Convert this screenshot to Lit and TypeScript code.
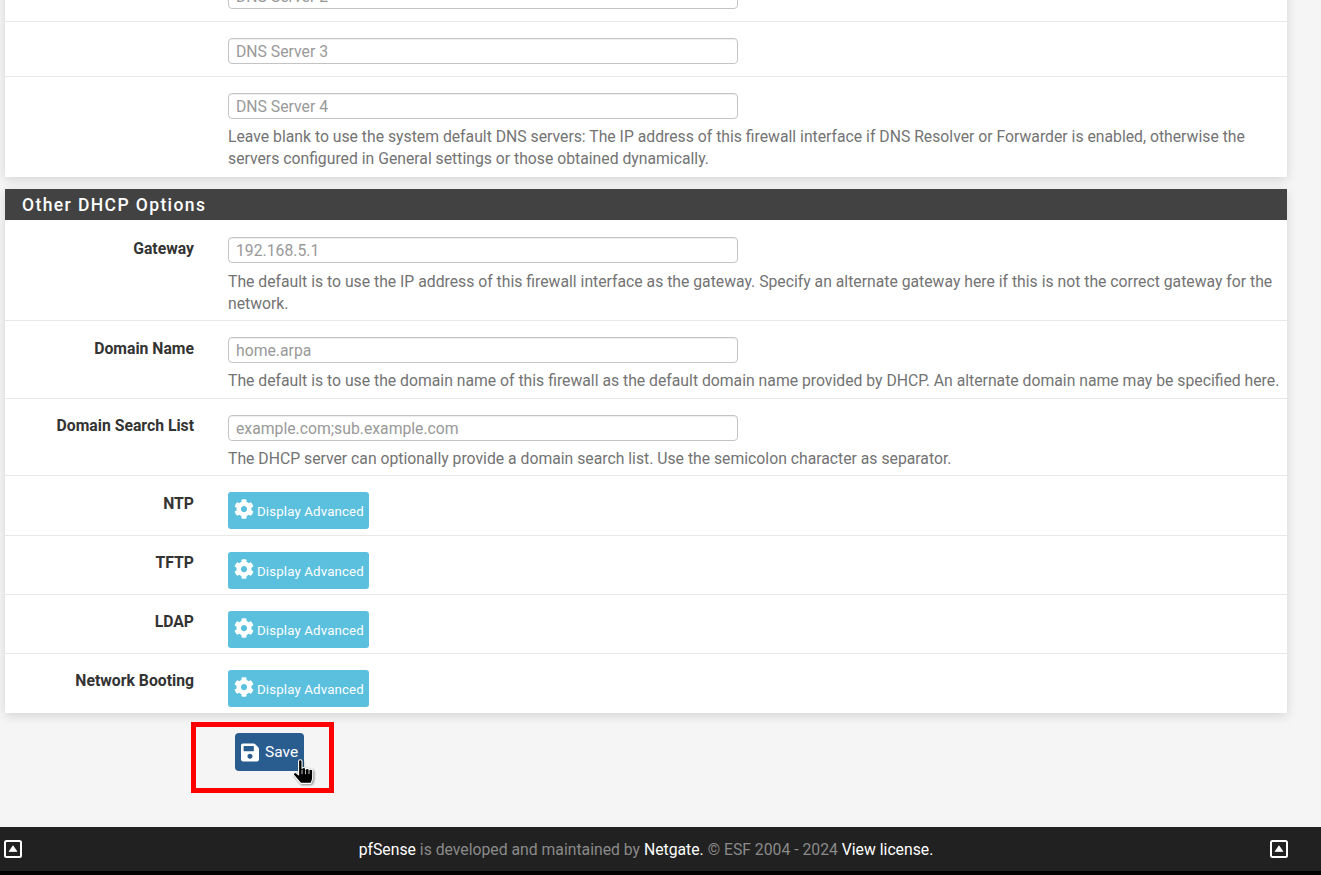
import { LitElement, html, css } from "lit";
import { customElement } from "lit/decorators.js";

const gear = html`<svg class="gear" viewBox="0 0 512 512" aria-hidden="true"><path fill="currentColor" d="M487.4 315.7l-42.6-24.6c4.3-23.2 4.3-47 0-70.2l42.6-24.6c4.9-2.8 7.1-8.6 5.5-14-11.1-35.6-30-67.8-54.7-94.6-3.8-4.1-10-5.1-14.8-2.3L380.8 110c-17.9-15.4-38.5-27.3-60.8-35.1V25.8c0-5.6-3.9-10.5-9.4-11.7-36.7-8.2-74.3-7.8-109.2 0-5.5 1.2-9.4 6.1-9.4 11.7V75c-22.2 7.9-42.8 19.8-60.8 35.1L88.7 85.5c-4.9-2.8-11-1.9-14.8 2.3-24.7 26.7-43.6 58.9-54.7 94.6-1.7 5.4.6 11.2 5.5 14L67.3 221c-4.3 23.2-4.3 47 0 70.2l-42.6 24.6c-4.9 2.8-7.1 8.6-5.5 14 11.1 35.6 30 67.8 54.7 94.6 3.8 4.1 10 5.1 14.8 2.3l42.6-24.6c17.9 15.4 38.5 27.3 60.8 35.1v49.2c0 5.6 3.9 10.5 9.4 11.7 36.7 8.2 74.3 7.8 109.2 0 5.5-1.2 9.4-6.1 9.4-11.7v-49.2c22.2-7.9 42.8-19.8 60.8-35.1l42.6 24.6c4.9 2.8 11 1.9 14.8-2.3 24.7-26.7 43.6-58.9 54.7-94.6 1.5-5.5-.7-11.3-5.6-14.1zM256 336c-44.1 0-80-35.9-80-80s35.9-80 80-80 80 35.9 80 80-35.9 80-80 80z"/></svg>`;

const floppy = html`<svg class="floppy" viewBox="0 0 448 512" aria-hidden="true"><path fill="currentColor" d="M433.9 129.9l-83.9-83.9A48 48 0 0 0 316.1 32H48C21.5 32 0 53.5 0 80v352c0 26.5 21.5 48 48 48h352c26.5 0 48-21.5 48-48V163.9a48 48 0 0 0-14.1-34zM224 416c-35.3 0-64-28.7-64-64 0-35.3 28.7-64 64-64s64 28.7 64 64c0 35.300-28.7 64-64 64zm96-304.5V212c0 6.6-5.4 12-12 12H76c-6.6 0-12-5.4-12-12V108c0-6.6 5.4-12 12-12h228.5c3.2 0 6.2 1.3 8.5 3.5l3.5 3.5c2.2 2.2 3.500 5.3 3.500 8.5z"/></svg>`;

const upIcon = html`<svg class="up" viewBox="0 0 18 18" aria-hidden="true"><rect x="1" y="1" width="16" height="16" rx="1.5" fill="none" stroke="#fff" stroke-width="2"/><path fill="#fff" stroke="#fff" stroke-width=".8" stroke-linejoin="round" d="M9 5.800 12.900 11.400H5.100z"/></svg>`;

const cursor = html`<svg class="cursor" viewBox="0 0 22 24" aria-hidden="true"><path fill="#000" stroke="#fff" stroke-width="1" stroke-linejoin="round" d="M6 2c0-1.800 3.200-1.800 3.200 0v6.800c0-1.300 3.200-1.300 3.200 0v.8c0-1.300 3.200-1.300 3.200 0v.8c0-1.300 3.400-1.300 3.400 0V17c0 2-.6 3.500-1.500 5.500H8L1.500 14.800c-1-1.500 1-3 2.500-1.800L6 14.600z"/><path stroke="#fff" stroke-width=".7" d="M9.200 10v4M12.400 10.500v3.500M15.600 11v3"/></svg>`;

@customElement("app-root")
export class AppRoot extends LitElement {
  static styles = css`
    :host {
      display: block;
      height: 875px;
      overflow: hidden;
      background: #f5f5f5;
      font-family: Roboto, "Liberation Sans", sans-serif;
      font-size: 15.75px;
      color: #333;
    }
    .page {
      height: 875px;
      display: flex;
      flex-direction: column;
      overflow: hidden;
    }
    .panels {
      width: 1282px;
      margin: -33px 0 0 5px;
    }
    .panel {
      background: #fff;
      box-shadow: 0 3px 10px rgba(0, 0, 0, 0.13);
    }
    .panel + .panel {
      margin-top: 12px;
    }
    .heading {
      height: 31px;
      background: #424242;
      color: #fff;
      font-size: 17.5px;
      font-weight: 500;
      letter-spacing: 1.4px;
      line-height: 33px;
      padding-left: 17px;
    }
    .row {
      display: grid;
      grid-template-columns: 189px 1fr;
      column-gap: 34px;
      padding: 16px 0 6px;
      border-bottom: 1px solid #e8e8e8;
    }
    .row:last-child {
      border-bottom-color: transparent;
    }
    .heading + .row {
      padding: 17px 0 5px;
    }
    .heading + .row .help {
      margin-top: 8px;
    }
    .label {
      text-align: right;
      font-weight: 700;
      font-size: 15.75px;
      line-height: 23px;
      color: #333;
    }
    .tight .label,
    .tight + .adv ~ .adv .label {
      line-height: 22px;
    }
    .input {
      box-sizing: border-box;
      width: 510px;
      height: 26px;
      border: 1px solid #c4c4c4;
      border-radius: 4px;
      background: #fff;
      color: #999;
      font-size: 15.75px;
      line-height: 25px;
      padding-left: 7px;
      box-shadow: inset 0 1px 1px rgba(0, 0, 0, 0.07);
    }
    .help {
      margin-top: 7px;
      font-size: 15.75px;
      line-height: 22px;
      color: #737373;
      white-space: nowrap;
    }
    .single {
      height: 55px;
      box-sizing: border-box;
    }
    .tight {
      padding-bottom: 5px;
    }
    .adv {
      height: 59px;
      box-sizing: border-box;
      padding-top: 16px;
    }
    .tight + .adv {
      height: 60px;
    }
    .btn-info {
      box-sizing: border-box;
      display: inline-flex;
      align-items: flex-start;
      width: 141px;
      height: 37px;
      background: #5bc0de;
      color: #fff;
      border-radius: 3px;
      padding: 7px 0 0 6px;
      font-size: 13.25px;
      line-height: 25px;
      white-space: nowrap;
      letter-spacing: 0.15px;
    }
    .gear {
      width: 20px;
      height: 20px;
      margin-right: 3px;
      flex: none;
    }
    .save-box {
      box-sizing: border-box;
      width: 143px;
      height: 72px;
      margin: 9px 0 0 190.5px;
      border: 5px solid #ff0000;
      padding: 6px 0 0 39.5px;
    }
    .save {
      position: relative;
      box-sizing: border-box;
      width: 69px;
      height: 38px;
      background: #2a5d8f;
      color: #fff;
      border-radius: 4px;
      display: flex;
      align-items: center;
      padding-left: 6px;
      font-size: 15.5px;
    }
    .floppy {
      width: 18px;
      height: 21px;
      margin-right: 6px;
    }
    .cursor {
      position: absolute;
      left: 57px;
      top: 26px;
      width: 24px;
      height: 26px;
      filter: drop-shadow(1px 1px 1px rgba(0, 0, 0, 0.45));
    }
    .footer {
      margin-top: 34px;
      height: 44px;
      flex: none;
      background: #212121;
      color: #8a8a8a;
      display: grid;
      grid-template-columns: 1fr auto 1fr;
      align-items: center;
      font-size: 15.75px;
      border-bottom: 4px solid #000;
      padding: 0 33px 0 4px;
    }
    .footer b {
      font-weight: 400;
      color: #fff;
    }
    .up {
      width: 18px;
      height: 18px;
      display: block;
    }
    .right .up {
      margin-left: auto;
    }
  `;

  private adv(label: string) {
    return html`<div class="row adv">
      <div class="label">${label}</div>
      <div><div class="btn-info">${gear}Display Advanced</div></div>
    </div>`;
  }

  private field(label: string, placeholder: string, help: string[] = [], cls = "") {
    return html`<div class="row ${cls}">
      <div class="label">${label}</div>
      <div>
        <div class="input">${placeholder}</div>
        ${help.length ? html`<div class="help">${help.map((l) => html`<div>${l}</div>`)}</div>` : ""}
      </div>
    </div>`;
  }

  render() {
    return html`<div class="page">
      <div class="panels">
        <div class="panel">
          ${this.field("", "DNS Server 2", [], "single")}
          ${this.field("", "DNS Server 3", [], "single")}
          ${this.field("", "DNS Server 4", [
            "Leave blank to use the system default DNS servers: The IP address of this firewall interface if DNS Resolver or Forwarder is enabled, otherwise the",
            "servers configured in General settings or those obtained dynamically.",
          ])}
        </div>
        <div class="panel">
          <div class="heading">Other DHCP Options</div>
          ${this.field("Gateway", "192.168.5.1", [
            "The default is to use the IP address of this firewall interface as the gateway. Specify an alternate gateway here if this is not the correct gateway for the",
            "network.",
          ])}
          ${this.field("Domain Name", "home.arpa", [
            "The default is to use the domain name of this firewall as the default domain name provided by DHCP. An alternate domain name may be specified here.",
          ])}
          ${this.field("Domain Search List", "example.com;sub.example.com", [
            "The DHCP server can optionally provide a domain search list. Use the semicolon character as separator.",
          ], "tight")}
          ${this.adv("NTP")}
          ${this.adv("TFTP")}
          ${this.adv("LDAP")}
          ${this.adv("Network Booting")}
        </div>
      </div>
      <div class="save-box">
        <div class="save">${floppy}Save${cursor}</div>
      </div>
      <div class="footer">
        <div>${upIcon}</div>
        <div><b>pfSense</b> is developed and maintained by <b>Netgate.</b> © ESF 2004 - 2024 <b>View license.</b></div>
        <div class="right">${upIcon}</div>
      </div>
    </div>`;
  }
}
